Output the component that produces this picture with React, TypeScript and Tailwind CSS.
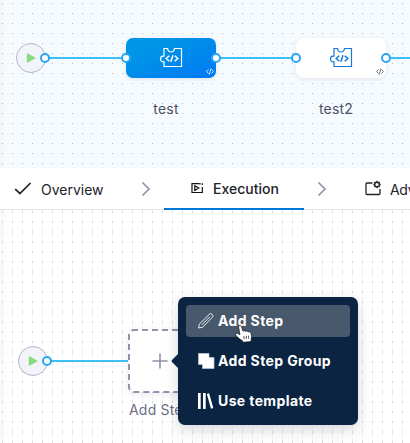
import type { ReactNode } from "react";

function Port({ className }: { className: string }) {
  return <span className={`absolute size-[10px] rounded-full border-2 border-[#2aa5f5] bg-white ${className}`} />;
}

function StartNode() {
  return (
    <div className="relative flex size-[30px] shrink-0 items-center justify-center rounded-full border border-[#b5b3cb] bg-[#f3f3fa]">
      <svg width="10" height="10" viewBox="0 0 10 10">
        <path d="M1.5 1v8L8.8 5z" fill="#86db83" stroke="#86db83" strokeWidth="1.4" strokeLinejoin="round" />
      </svg>
      <Port className="-right-[5px]" />
    </div>
  );
}

function Connector() {
  return <div className="h-[2px] flex-1 bg-[#3ec0f8]" />;
}

function PuzzleIcon() {
  return (
    <svg width="24" height="22" viewBox="0 0 24 22" fill="none" stroke="currentColor">
      <path d="M5 1.500h3.600c.3 2.400 1.500 3.500 3.400 3.500s3.200-1.100 3.500-3.500H22.500v18H5V14.800H4.200C2.400 14.800 1.500 13.500 1.500 12s.9-2.800 2.700-2.800H5z" strokeWidth="1.200" />
      <path d="M10.300 8.800 7.200 11.500l3.100 2.700M15.700 8.800l3.100 2.700-3.100 2.700M14 8.200l-2.200 6.600" strokeWidth="1.500" />
    </svg>
  );
}

function StepNode({ label, className, markClass }: { label: string; className: string; markClass: string }) {
  return (
    <div className="relative w-[90px] shrink-0">
      <div className={`relative flex h-[40px] items-center justify-center rounded-[7px] shadow-[0_1px_4px_rgba(96,97,112,0.16)] ${className}`}>
        <PuzzleIcon />
        <svg className={`absolute right-[2px] bottom-[3px] ${markClass}`} width="8" height="7" viewBox="0 0 8 7" fill="none" stroke="currentColor" strokeWidth=".8">
          <path d="M2.500 1.400.6 3.500l1.900 2M5.500 1.400l1.900 2.100-1.900 2M4.900.6 3.200 6.500" />
        </svg>
        <Port className="-left-[5px]" />
        <Port className="-right-[5px]" />
      </div>
      <div className="absolute top-full left-0 w-[80px] pt-[21px] text-center text-[14px] leading-5 tracking-[0.2px] text-[#4f5162]">{label}</div>
    </div>
  );
}

function Chevron() {
  return (
    <svg className="shrink-0" width="10" height="16" viewBox="0 0 10 16" fill="none" stroke="#9293ab" strokeWidth="1.700">
      <path d="m1.500 1.500 6.500 6.500-6.500 6.500" />
    </svg>
  );
}

function MenuItem({ icon, label, active = false }: { icon: ReactNode; label: string; active?: boolean }) {
  return (
    <div className={`flex h-8 items-center rounded px-3 ${active ? "bg-[#48586d]" : ""}`}>
      <span className="flex w-5 shrink-0">{icon}</span>
      <span className="text-[14px] leading-5 font-bold tracking-[0.38px] whitespace-nowrap text-white">{label}</span>
    </div>
  );
}

function StepMenu() {
  return (
    <div className="absolute top-[87px] left-[178px] flex h-[128px] w-[180px] flex-col gap-2 rounded-[7px] bg-[#0b2442] p-2 shadow-[0_5px_14px_rgba(40,41,61,0.18)]">
      <svg className="absolute top-[55px] left-[-7px]" width="8" height="18" viewBox="0 0 8 18">
        <path d="M8 1 1 8q-1 1 0 2l7 7z" fill="#0b2442" />
      </svg>
      <MenuItem
        active
        label="Add Step"
        icon={
          <svg width="16" height="16" viewBox="0 0 16 16" fill="none" stroke="white" strokeWidth=".9" strokeLinejoin="round">
            <path d="M.6 15 1.300 11.200 11.300 1.300c1.900-1.700 4.700.8 3.100 3L4.500 14.300zM3.800 11.900 11.900 3.800" />
          </svg>
        }
      />
      <MenuItem
        label="Add Step Group"
        icon={
          <svg width="17" height="16" viewBox="0 0 17 16" fill="white" stroke="#bcc4cd" strokeWidth=".8">
            <path d="M.5.5h10.500v4H16v11H4.500v-4h-4z" />
          </svg>
        }
      />
      <MenuItem
        label="Use template"
        icon={
          <svg width="16" height="16" viewBox="0 0 16 16" fill="white">
            <path d="M0 0h2.700v16H0zM5 0h2.700v16H5zM8.800 1l2.300-.7 4.200 14.800-2.300.7z" />
          </svg>
        }
      />
    </div>
  );
}

function HandCursor() {
  return (
    <svg className="absolute top-[115px] left-[235px]" width="18" height="18" viewBox="0 0 18 18" strokeLinejoin="round">
      <path d="M3.500 1.700c.4-1.500 2.500-1.500 3 0l1.500 4.500c.8-.8 2.100-.7 2.600.2.900-.7 2.100-.4 2.500.5 1.200-.5 2.500.2 2.900 1.500.7 2.200.8 4.100.1 5.900l.1 2.200-8 .8-.8-1.600C5 14.600 3.200 12.600 1 10.600-.1 9.300 1.200 7.700 2.800 8.500l2.200 1.300z" fill="white" stroke="#10141a" strokeWidth=".7" />
      <path d="M9 11v3.200M11.300 10.800V14M13.600 10.600v3.200" fill="none" stroke="#10141a" strokeWidth=".7" />
    </svg>
  );
}

export default function App() {
  return (
    <div className="flex h-[443px] w-[410px] flex-col overflow-hidden bg-white font-['Inter',sans-serif]">
      <section className="relative h-[168px] shrink-0 overflow-hidden bg-linear-to-r from-[#f2f6f9] to-[#f6fbff] to-[10px]">
        <svg className="absolute inset-0" width="410" height="168" shapeRendering="crispEdges">
          <defs>
            <pattern id="dots" width="10" height="10" patternUnits="userSpaceOnUse">
              <rect x="2" y="3" width="1" height="1" fill="#b3b6b9" />
            </pattern>
          </defs>
          <rect width="410" height="168" fill="url(#dots)" />
        </svg>
        <div className="relative flex items-center pt-[38px] pl-4">
          <StartNode />
          <Connector />
          <StepNode label="test" className="bg-linear-to-br from-[#0095e5] from-25% to-[#0278f5] text-white" markClass="text-white" />
          <div className="flex w-20 shrink-0"><Connector /></div>
          <StepNode label="test2" className="bg-white text-[#1479d7]" markClass="text-[#4f5162]" />
          <div className="flex w-6 shrink-0"><Connector /></div>
        </div>
      </section>

      <nav className="flex h-[42px] shrink-0 items-center border-b border-[#dfe1e3] bg-white pl-[14px] text-[14px] leading-5 text-[#22222a]">
        <div className="flex w-[127px] shrink-0 items-center gap-[9px]">
          <svg className="shrink-0" width="18" height="16" viewBox="0 0 18 16" fill="none" stroke="currentColor" strokeWidth="1.700">
            <path d="m1.200 8.200 4.700 4.300L16.500 2" />
          </svg>
          <span className="pt-[2px]">Overview</span>
        </div>
        <Chevron />
        <div className="mx-[13px] flex h-[42px] w-[140px] shrink-0 items-center gap-[9px] border-b-2 border-[#0278d5] pl-[26px] font-medium">
          <svg width="14" height="12" viewBox="0 0 14 12" fill="none" stroke="#111" strokeWidth="1.200">
            <path d="M9.200 1.700H2v8.800h10.300V5M12.300 3V1.300M4.800 3.700v4.800l4-2.400zM10 .9v1.600" />
          </svg>
          <span className="pt-[2px]">Execution</span>
        </div>
        <Chevron />
        <div className="flex items-center gap-2 overflow-hidden pl-[38px]">
          <svg className="mb-[2px] shrink-0" width="17" height="16" viewBox="0 0 17 16" fill="none" stroke="currentColor" strokeWidth="1.300">
            <path d="M7.500 3H2c-.7 0-1 .3-1 1v9.500c0 .7.3 1 1 1h12c.7 0 1-.3 1-1V9" />
            <circle cx="12" cy="4.500" r="2.300" strokeWidth="1.400" />
            <path d="M12 .8v1.400M12 6.800v1.400M8.300 4.500h1.400M14.300 4.500h1.400M9.400 1.900l1 1M13.600 6.100l1 1M14.600 1.900l-1 1M10.400 6.100l-1 1" />
          </svg>
          <span className="pt-[2px] tracking-[-0.3px] whitespace-nowrap">Advanced</span>
        </div>
      </nav>

      <section className="relative h-[233px] shrink-0 bg-linear-to-r from-[#f9f9fa] to-white to-[8px]">
        <svg className="absolute inset-0" width="410" height="233" shapeRendering="crispEdges">
          <defs>
            <pattern id="grid" width="10" height="10" patternUnits="userSpaceOnUse">
              <rect x="2" width="1" height="10" fill="#f0fafc" />
              <rect x="2" y="1" width="1" height="2" fill="#d0dadc" />
            </pattern>
          </defs>
          <rect width="410" height="233" fill="url(#grid)" />
        </svg>
        <div className="relative flex w-[195px] items-center pt-[118px] pl-[18px]">
          <StartNode />
          <Connector />
          <div className="relative -ml-px w-[68px] shrink-0">
            <svg className="drop-shadow-[0_2px_3px_rgba(96,97,112,0.12)]" width="68" height="66" viewBox="0 0 68 66" fill="none" stroke="#9293ab">
              <rect x="2" y="2" width="63" height="62" rx="5" fill="white" strokeWidth="2" strokeDasharray="6 4" strokeDashoffset="2" />
              <path d="M33 25.500v15M25.500 33h15" strokeWidth="1.600" />
            </svg>
            <div className="absolute top-full left-[2px] pt-[6px] text-[14px] leading-5 tracking-[0.2px] whitespace-nowrap text-[#6b6d85]">Add Step</div>
          </div>
        </div>
        <StepMenu />
        <HandCursor />
      </section>
    </div>
  );
}
